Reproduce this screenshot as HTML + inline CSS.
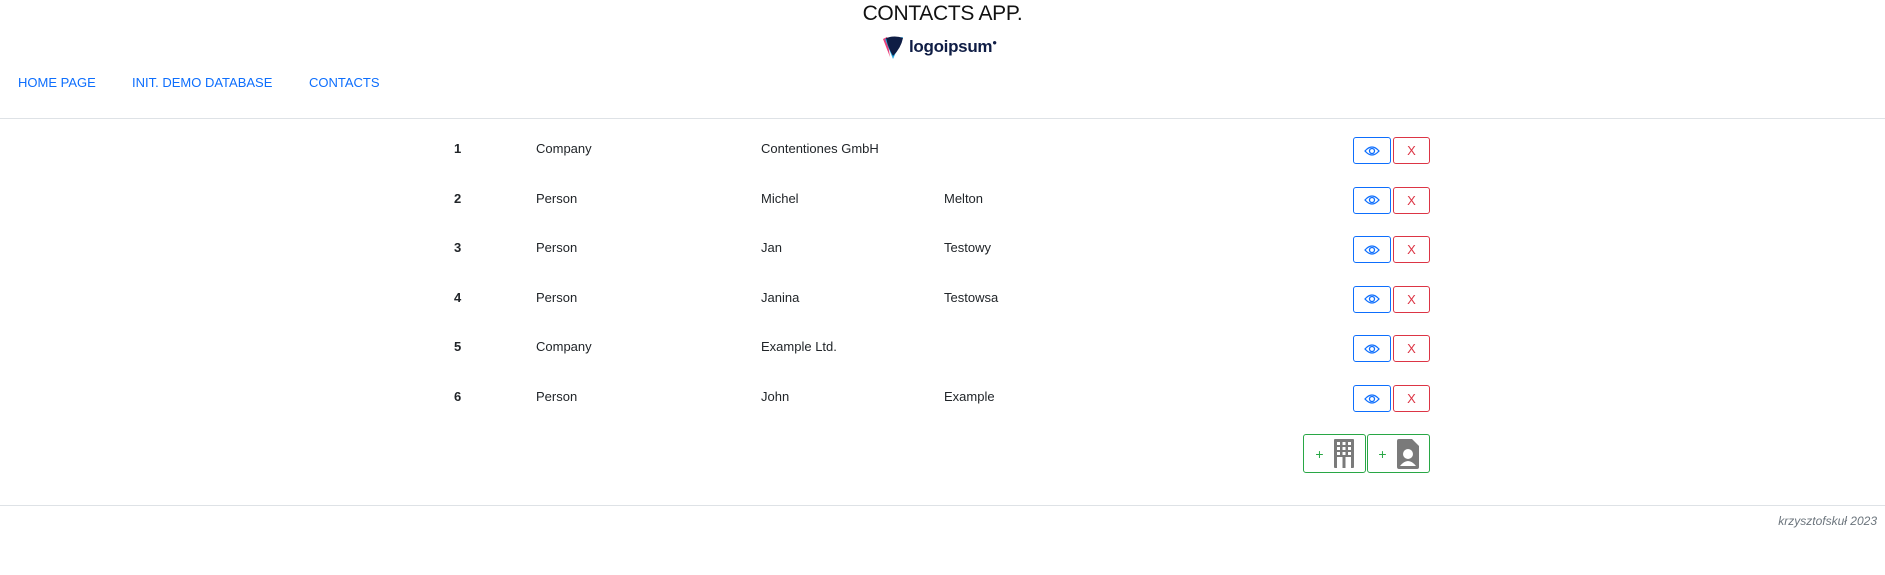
<!DOCTYPE html>
<html><head><meta charset="utf-8"><style>
body{margin:0;width:1885px;height:575px;background:#fff;font-family:"Liberation Sans",sans-serif;color:#212529;position:relative;overflow:hidden}
.a{position:absolute;white-space:nowrap}
h1{position:absolute;margin:0;left:0;width:1885px;text-align:center;top:2px;font-size:21px;font-weight:normal;color:#111;letter-spacing:-0.3px}
.nav{color:#0d6efd;font-size:13px;top:75px}
.hr{position:absolute;left:0;width:1885px;height:1px;background:#dee2e6}
.c{font-size:13px;color:#212529}
.id{font-weight:bold}
.btn{position:absolute;box-sizing:border-box;border:1px solid;border-radius:3px;display:flex;align-items:center;justify-content:center;background:#fff}
.eye{border-color:#0d6efd;width:38px;height:27px}
.x{border-color:#dc3545;color:#dc3545;width:37px;height:27px;font-size:13px}
.g{border-color:#28a745;color:#28a745;width:63px;height:39px;font-size:14px;gap:10px}
</style></head><body>
<h1>CONTACTS APP.</h1>
<div class="a" style="left:881px;top:34px;height:26px;display:flex;align-items:center">
<svg width="26" height="26" viewBox="0 0 26 26"><path d="M2 5 L6 3 L9 23 Z" fill="#e8407a"/><path d="M4 5 L22 3 L12 25 Z" fill="#29a8e0"/><path d="M5 4 Q14 1 22 4 Q20 14 12 22 Q7 14 5 4Z" fill="#0f1d45"/></svg>
<span style="font-weight:bold;font-size:17px;color:#0f1d45;margin-left:2px;letter-spacing:-0.3px">logoipsum</span><span style="font-size:8px;color:#0f1d45;align-self:flex-start;margin-top:4px">●</span></div>
<div class="a nav" style="left:18px">HOME PAGE</div>
<div class="a nav" style="left:132px">INIT. DEMO DATABASE</div>
<div class="a nav" style="left:309px">CONTACTS</div>
<div class="hr" style="top:118px"></div>

<div id="rows"></div>
<script>
var d=[["1","Company","Contentiones GmbH",""],["2","Person","Michel","Melton"],["3","Person","Jan","Testowy"],["4","Person","Janina","Testowsa"],["5","Company","Example Ltd.",""],["6","Person","John","Example"]];
var h="";var eye='<svg width="16" height="12" viewBox="0 0 16 12"><path d="M1 6 Q8 -2 15 6 Q8 14 1 6Z" fill="none" stroke="#0d6efd" stroke-width="1.3"/><circle cx="8" cy="6" r="2.5" fill="none" stroke="#0d6efd" stroke-width="1.3"/></svg>';
d.forEach(function(r,i){var y=141+i*49.5;var b=137+i*49.6;
h+='<div class="a c id" style="left:454px;top:'+y+'px">'+r[0]+'</div><div class="a c" style="left:536px;top:'+y+'px">'+r[1]+'</div><div class="a c" style="left:761px;top:'+y+'px">'+r[2]+'</div><div class="a c" style="left:944px;top:'+y+'px">'+r[3]+'</div>';
h+='<div class="btn eye" style="left:1353px;top:'+b+'px">'+eye+'</div><div class="btn x" style="left:1393px;top:'+b+'px">X</div>';});
document.getElementById("rows").innerHTML=h;
</script>
<div class="btn g" style="left:1303px;top:434px"><span>+</span><svg width="20" height="29" viewBox="0 0 20 29"><rect x="0" y="0" width="20" height="29" rx="1" fill="#7a7a7a"/><g fill="#fff"><rect x="3" y="3" width="3" height="3"/><rect x="8.5" y="3" width="3" height="3"/><rect x="14" y="3" width="3" height="3"/><rect x="3" y="8" width="3" height="3"/><rect x="8.5" y="8" width="3" height="3"/><rect x="14" y="8" width="3" height="3"/><rect x="3" y="13" width="3" height="3"/><rect x="8.5" y="13" width="3" height="3"/><rect x="14" y="13" width="3" height="3"/><rect x="3" y="18" width="5.5" height="11"/><rect x="11.5" y="18" width="5.5" height="11"/></g></svg></div>
<div class="btn g" style="left:1367px;top:434px"><span>+</span><svg width="22" height="30" viewBox="0 0 22 30"><path d="M2 0 H15 L22 7 V28 Q22 30 20 30 H2 Q0 30 0 28 V2 Q0 0 2 0Z" fill="#7a7a7a"/><circle cx="11" cy="15" r="5" fill="#fff"/><path d="M3 27 Q11 17 19 27Z" fill="#fff"/></svg></div>
<div class="hr" style="top:505px"></div>
<div class="a" style="right:8px;top:514px;font-size:12px;font-style:italic;color:#6c757d">krzysztofskuł 2023</div>
</body></html>
